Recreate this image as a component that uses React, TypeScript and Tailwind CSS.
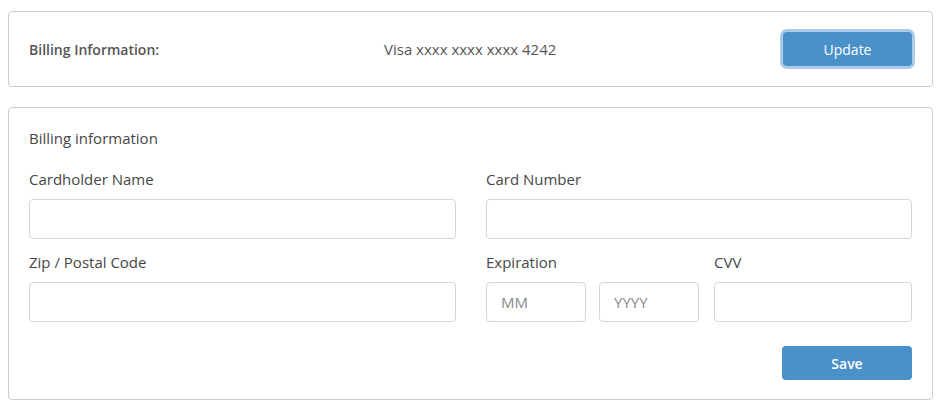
export default function App() {
  const font = { fontFamily: '"Open Sans", "Liberation Sans", sans-serif' }

  return (
    <div className="bg-white min-h-screen pl-2 pt-[11px] pr-3 text-[#474747]" style={font}>
      {/* Summary */}
      <div className="w-[925px] h-[76px] border border-[#cccccc] rounded flex items-center px-5">
        <div className="w-[355px] text-[14px] font-semibold text-[#555]">Billing Information:</div>
        <div className="text-[15px] text-[#555]">Visa xxxx xxxx xxxx 4242</div>
        <button className="ml-auto w-[129px] h-[34px] rounded bg-[#4a90c9] text-white text-[14px] font-medium ring-[3px] ring-[#a9cbe9]">
          Update
        </button>
      </div>

      {/* Form */}
      <div className="w-[925px] mt-5 border border-[#cccccc] rounded px-5 pt-5 pb-[19px]">
        <div className="text-[15px] leading-5 font-medium">Billing information</div>

        <div className="grid grid-cols-[427px_1fr] gap-x-[30px] mt-[21px]">
          <div>
            <label className="block text-[15px] leading-5 font-medium mb-[10px]">Cardholder Name</label>
            <input className="w-full h-10 border border-[#d3d6db] rounded px-[14px] outline-none" />
          </div>
          <div>
            <label className="block text-[15px] leading-5 font-medium mb-[10px]">Card Number</label>
            <input className="w-full h-10 border border-[#d3d6db] rounded px-[14px] outline-none" />
          </div>

          <div className="mt-[13px]">
            <label className="block text-[15px] leading-5 font-medium mb-[10px]">Zip / Postal Code</label>
            <input className="w-full h-10 border border-[#d3d6db] rounded px-[14px] outline-none" />
          </div>
          <div className="mt-[13px] flex">
            <div className="w-[213px]">
              <label className="block text-[15px] leading-5 font-medium mb-[10px]">Expiration</label>
              <div className="flex gap-[13px]">
                <input
                  placeholder="MM"
                  className="w-[100px] h-10 border border-[#d3d6db] rounded px-[14px] text-[15px] placeholder:text-[#8a8a8a] outline-none"
                />
                <input
                  placeholder="YYYY"
                  className="w-[100px] h-10 border border-[#d3d6db] rounded px-[14px] text-[15px] placeholder:text-[#8a8a8a] outline-none"
                />
              </div>
            </div>
            <div className="flex-1 ml-[15px]">
              <label className="block text-[15px] leading-5 font-medium mb-[10px]">CVV</label>
              <input className="w-full h-10 border border-[#d3d6db] rounded px-[14px] outline-none" />
            </div>
          </div>
        </div>

        <div className="flex justify-end mt-6">
          <button className="w-[130px] h-[34px] rounded bg-[#4a90c9] text-white text-[14px] font-semibold">
            Save
          </button>
        </div>
      </div>
    </div>
  )
}
